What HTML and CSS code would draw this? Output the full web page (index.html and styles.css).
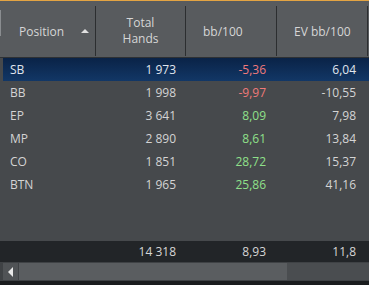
FILE: index.html
```html
<!DOCTYPE html>
<html>
<head>
<meta charset="utf-8">
<link rel="stylesheet" href="styles.css">
</head>
<body>
<div class="panel">
  <div class="accent"></div>
  <div class="header">
    <div class="hcell first"><span class="edge"></span><span class="label">Position</span><span class="sort"></span></div>
    <div class="hcell center"><span>Total<br>Hands</span></div>
    <div class="hcell"><span class="label pad">bb/100</span></div>
    <div class="hcell"><span class="label pad">EV bb/100</span></div>
    <div class="hcell rest"></div>
  </div>
  <div class="rows">
    <div class="row sel"><span class="pos">SB</span><span class="num">1 973</span><span class="num neg">-5,36</span><span class="num">6,04</span></div>
    <div class="row"><span class="pos">BB</span><span class="num">1 998</span><span class="num neg">-9,97</span><span class="num">-10,55</span></div>
    <div class="row"><span class="pos">EP</span><span class="num">3 641</span><span class="num pos-v">8,09</span><span class="num">7,98</span></div>
    <div class="row"><span class="pos">MP</span><span class="num">2 890</span><span class="num pos-v">8,61</span><span class="num">13,84</span></div>
    <div class="row"><span class="pos">CO</span><span class="num">1 851</span><span class="num pos-v">28,72</span><span class="num">15,37</span></div>
    <div class="row"><span class="pos">BTN</span><span class="num">1 965</span><span class="num pos-v">25,86</span><span class="num">41,16</span></div>
  </div>
  <div class="footer"><span class="pos"></span><span class="num">14 318</span><span class="num">8,93</span><span class="num">11,8</span></div>
  <div class="scrollbar">
    <div class="sbtn"><span class="tri"></span></div>
    <div class="thumb"></div>
    <div class="track"></div>
  </div>
</div>
</body>
</html>
```
FILE: styles.css
```css
* { box-sizing: border-box; }
html, body { margin: 0; padding: 0; }
body {
  width: 369px;
  height: 285px;
  background: #1c1e20;
  font-family: "Open Sans", "Noto Sans", sans-serif;
  font-size: 12px;
  color: #d4d4d4;
  overflow: hidden;
}
.panel {
  display: flex;
  flex-direction: column;
  height: 285px;
}
.accent {
  height: 1px;
  background: #e3a443;
}
.header {
  height: 57px;
  background: #585b5e;
  border-bottom: 1px solid #2e3134;
  display: grid;
  grid-template-columns: 96px 90px 91px 91px 1fr;
  padding-top: 5px;
  padding-bottom: 1px;
  color: #d6d6d6;
}
.hcell {
  border-right: 1px solid #2c2e30;
  display: flex;
  align-items: center;
}
.hcell.rest { border-right: none; }
.first { padding-left: 0; }
.edge {
  width: 1px;
  height: 26px;
  background: #8a8d90;
  align-self: flex-start;
  margin-top: 4px;
}
.first .label { margin-left: 18px; }
.sort {
  width: 0;
  height: 0;
  border-left: 4px solid transparent;
  border-right: 4px solid transparent;
  border-bottom: 4px solid #e0e0e0;
  margin-left: 17px;
}
.center { justify-content: center; text-align: center; line-height: 16px; }
.pad { margin-left: 17px; }
.rows {
  flex: 1;
  background: #46494c;
  padding-left: 3px;
}
.row, .footer {
  display: grid;
  grid-template-columns: 92px 81px 90px 90px;
  height: 23px;
  align-items: center;
}
.row .pos { padding-left: 7px; }
.num { text-align: right; }
.sel {
  background: linear-gradient(#0a2347, #123766);
  color: #e0e6ee;
}
.neg { color: #f07a7a; }
.pos-v { color: #8fe08a; }
.footer {
  height: 21px;
  background: #222528;
  padding-left: 3px;
  color: #d6d6d6;
}
.scrollbar {
  height: 19px;
  background: #3f4245;
  display: flex;
  padding: 1px 0 1px 3px;
  border-bottom: 4px solid #1a1c1e;
  height: 23px;
}
.sbtn {
  width: 16px;
  background: #505356;
  border-right: 1px solid #3f4245;
  display: flex;
  align-items: center;
  justify-content: center;
}
.tri {
  width: 0;
  height: 0;
  border-top: 5px solid transparent;
  border-bottom: 5px solid transparent;
  border-right: 5px solid #e8e8e8;
}
.thumb {
  width: 268px;
  background: #5a5d60;
}
.track {
  flex: 1;
  background: #4a4d50;
}
```
